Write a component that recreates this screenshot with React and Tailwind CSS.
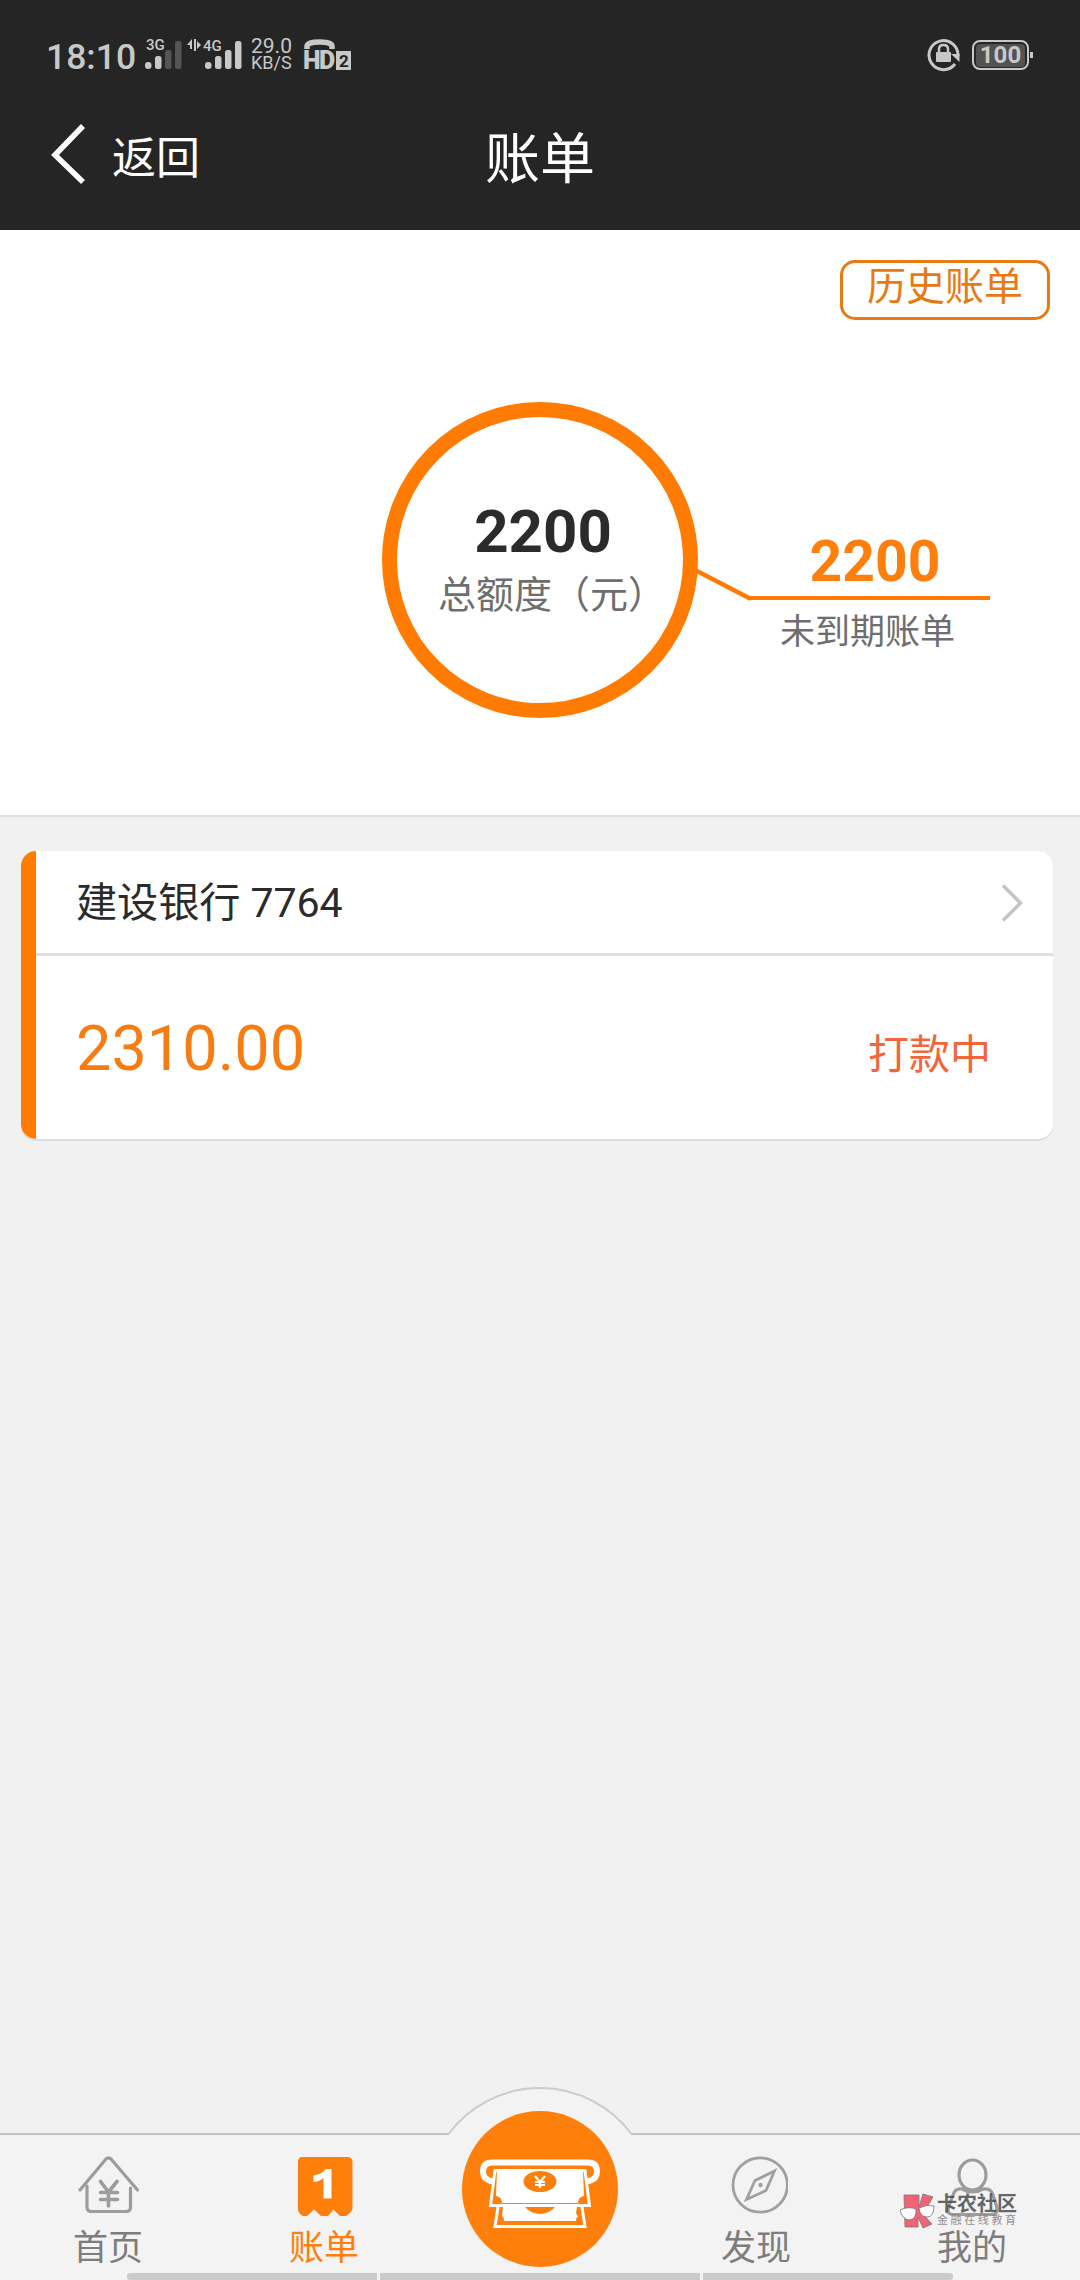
import React from "react";

const TABS = [
    { key: "home", label: "首页", Icon: HomeIcon },
    { key: "bill", label: "账单", Icon: BillIcon, active: true },
    { key: "cash", label: "", Icon: null },
    { key: "discover", label: "发现", Icon: CompassIcon },
    { key: "me", label: "我的", Icon: UserIcon },
];

function HomeIcon() {
    return (
        <svg className="block" width="64" height="64" viewBox="0 0 64 64" fill="none" stroke="#9c9c9c" strokeLinecap="round" strokeLinejoin="round">
            <path d="M4 37 L30 6 Q32.500 3.500 35 6 L61.500 37" strokeWidth="3.200" />
            <path d="M11 33 V54 Q11 58.500 15.500 58.500 H50 Q54.500 58.500 54.500 54 V35" strokeWidth="3.200" />
            <path d="M24.500 28.500 L32.500 39 L41 28.500 M32.500 39 V53 M24.500 39.500 H41.500 M24.500 46.500 H41.500" strokeWidth="3.600" />
        </svg>
    );
}

function BillIcon() {
    return (
        <svg className="block" width="64" height="64" viewBox="0 0 64 64">
            <path d="M10.500 4 H55 Q60.500 4 60.500 9 V56 Q58 61 54 63 H48 L41.500 56.500 L36 63 H29 L22 56.500 L15 63 H11 Q7 61 6 57 V9 Q6 4 10.500 4 Z" fill="#ff7f0c" />
            <path d="M34 16 H39.500 V45.500 H31.500 V25 Q27 29 21.500 29 V22.500 Q30 21 34 16 Z" fill="#fff" />
        </svg>
    );
}

function CompassIcon() {
    return (
        <svg className="block" width="64" height="64" viewBox="0 0 64 64" fill="none" stroke="#a0a0a0">
            <circle cx="36.200" cy="32" r="27.200" strokeWidth="2.800" />
            <path d="M50.500 18 L42 37.500 L22.500 46.500 L31 27.500 Z" strokeWidth="2.800" />
            <circle cx="36.500" cy="32" r="2.200" fill="#a0a0a0" stroke="none" />
        </svg>
    );
}

function UserIcon() {
    return (
        <svg className="block" width="64" height="64" viewBox="0 0 64 64" fill="none" stroke="#9c9c9c" strokeWidth="3.200">
            <ellipse cx="32.500" cy="22" rx="13.500" ry="15" />
            <path d="M22 36 Q15 35 13 42 L9 53 Q6 61.500 13 61.500 H51 Q59 61.500 56.500 53 L53 42 Q51 35 43 36 Q32.500 42 22 36 Z" />
        </svg>
    );
}

function SignalBars({ dim }) {
    return (
        <svg className="block" width="37" height="30" viewBox="0 0 37 30" fill="#c8c8c8">
            <rect x="0" y="21" width="6.500" height="7" rx="3" />
            <rect x="10" y="15" width="6.500" height="13" rx="2.500" />
            <rect x="20" y="9" width="6.500" height="19" rx="2.500" fill={dim ? "#555" : "#c8c8c8"} />
            <rect x="30" y="0" width="6.500" height="28" rx="2.500" fill={dim ? "#555" : "#c8c8c8"} />
        </svg>
    );
}

function StatusBar() {
    return (
        <div className="flex h-[110px] justify-between pl-[46px] pr-[47px] text-[#c8c8c8]">
            <div className="flex">
                <span className="mt-[36px] w-[99px] text-[35.500px] leading-[42px] font-medium">18:10</span>
                <div className="relative mt-[41px] w-[42px]">
                    <SignalBars dim />
                    <span className="absolute top-[-3px] left-[1px] text-[15px] leading-[15px] font-medium">3G</span>
                </div>
                <svg className="mt-[38px] block" width="15" height="14" viewBox="0 0 15 14" fill="#c8c8c8">
                    <path d="M0 7 L5 1 V11 H3 V7 Z M7 1 H9 V13 H7 Z M10 3 L14 7 L10 11 Z" />
                </svg>
                <div className="relative mt-[41px] ml-[3px] w-[46px]">
                    <SignalBars />
                    <span className="absolute top-[-2px] left-[-2px] text-[15px] leading-[15px] font-medium">4G</span>
                </div>
                <div className="mt-[38px] w-[53px]">
                    <div className="text-[21px] leading-[17px]">29.0</div>
                    <div className="text-[18px] leading-[16px]">KB/S</div>
                </div>
                <div className="relative mt-[38px] h-8 w-12">
                    <svg className="block" width="48" height="32" viewBox="0 0 48 32">
                        <path d="M3 11 V8.500 Q3 4 16 4 Q28 4 28 8.500 V11" fill="none" stroke="#c8c8c8" strokeWidth="5.500" />
                        <rect x="32" y="13" width="15" height="19" fill="#c8c8c8" />
                    </svg>
                    <span className="absolute top-[11px] left-[-1px] text-[25px] leading-[24px] font-black tracking-[-1.500px]">HD</span>
                    <span className="absolute top-[14px] left-[35px] text-[17px] leading-[18px] font-bold text-[#252525]">2</span>
                </div>
            </div>
            <div className="flex pt-[38px]">
                <svg className="mr-[11px] block" width="34" height="34" viewBox="0 0 34 34">
                    <path d="M28 26 A14.500 14.500 0 1 1 31 18" fill="none" stroke="#c8c8c8" strokeWidth="3" />
                    <path d="M24 16 H32.500 V24 Z" fill="#c8c8c8" />
                    <rect x="9" y="14" width="15" height="10" rx="1" fill="#c8c8c8" />
                    <path d="M12 15 V11 Q12 7 16.500 7 Q21 7 21 11 V15" fill="none" stroke="#c8c8c8" strokeWidth="2.500" />
                </svg>
                <div className="mt-[2px] flex h-[30px] w-[57px] items-center justify-center rounded-[8px] border-2 border-[#c8c8c8] p-[2px]">
                    <span className="flex h-[23px] w-full items-center justify-center rounded-[4px] bg-[#525252] text-[24px] leading-none font-bold">100</span>
                </div>
                <div className="mt-[14px] ml-[1px] h-[6px] w-[3px] bg-[#c8c8c8]" />
            </div>
        </div>
    );
}

function NavBar() {
    return (
        <div className="grid h-[120px] grid-cols-3 text-white">
            <div className="flex pl-[50px]">
                <svg className="mt-[14px] block" width="38" height="60" viewBox="0 0 38 60" fill="none" stroke="#fff" strokeWidth="5.500">
                    <path d="M33 2 L5 31 L33 58" />
                </svg>
                <span className="mt-[19px] ml-[24px] text-[44px] leading-[60px]">返回</span>
            </div>
            <h1 className="mt-[14px] text-center text-[55px] leading-[70px]">账单</h1>
        </div>
    );
}

function Quota() {
    return (
        <section className="flex h-[587px] flex-col border-b-2 border-[#dedede] bg-white">
            <button className="mt-[30px] mr-[30px] h-[60px] w-[210px] self-end rounded-[15px] border-3 border-[#e87a14] pb-[5px] text-[39px] leading-[47px] text-[#e87a14]">
                历史账单
            </button>
            <div className="mt-[82px] flex pl-[382px]">
                <div className="h-[316px] w-[316px] shrink-0 rounded-full border-[15px] border-[#ff7b02] pt-[79px]">
                    <div className="text-center text-[60px] leading-[72px] font-bold text-[#2b2b2b]">
                        <span className="relative left-[3px]">2200</span>
                    </div>
                    <div className="mt-[2px] ml-[41px] text-[38px] leading-[50px] whitespace-nowrap text-[#6e6e6e]">总额度（元）</div>
                </div>
                <svg className="mt-[160px] -ml-[3px] block shrink-0" width="56" height="46" viewBox="0 0 56 46" fill="none" stroke="#ff7b02" strokeWidth="4.500">
                    <path d="M0 8 L54 36 H56" />
                </svg>
                <div className="mt-[125px] w-[239px] text-center">
                    <div className="h-[73px] border-b-4 border-[#ff7b02] pl-[9px] text-[57px] leading-[70px] font-bold text-[#ff7f0c]">2200</div>
                    <div className="mt-[9px] pr-[6px] text-[35px] leading-[48px] text-[#6e6e6e]">未到期账单</div>
                </div>
            </div>
        </section>
    );
}

function BillCard() {
    return (
        <section className="mt-[34px] mr-[27px] ml-[21px] flex h-[288px] overflow-hidden rounded-[15px] bg-white shadow-[0_2px_1px_#dedede]">
            <div className="w-[15px] bg-[#ff7b02]" />
            <div className="flex-1">
                <div className="flex h-[105px] justify-between border-b-3 border-[#e0e0e0] pr-[29px] pl-10">
                    <span className="mt-[22px] text-[41.200px] leading-[60px] tracking-[-0.1px] text-[#2b2b2b]">建设银行 7764</span>
                    <svg className="mt-[32px] block" width="24" height="40" viewBox="0 0 24 40" fill="none" stroke="#c4c4c4" strokeWidth="3.500">
                        <path d="M3 2.500 L20.500 20 L3 37.500" />
                    </svg>
                </div>
                <div className="flex justify-between pr-[62px] pl-10">
                    <span className="mt-[55px] text-[63px] leading-[76px] text-[#f57d13]">2310.00</span>
                    <span className="mt-[69px] text-[41px] leading-[60px] text-[#f2663c]">打款中</span>
                </div>
            </div>
        </section>
    );
}

function CashButton() {
    return (
        <svg className="absolute top-[-49px] left-1/2 -ml-[93px]" width="186" height="190" viewBox="0 0 186 190">
            {/* bump above the bar */}
            <path d="M0 51 L1.500 48.500 A114 114 0 0 1 184.500 48.500 L186 51 Z" fill="#f3f3f3" />
            <path d="M0 49 L1.500 48 A114 114 0 0 1 184.500 48 L186 49" fill="none" stroke="#cbcbcb" strokeWidth="2" />
            <circle cx="93" cy="103" r="78" fill="#ff7f0c" />
            {/* slot */}
            <path d="M46 95 H44 Q36 93 36 85.500 Q36 76.500 45 76.500 H141 Q150 76.500 150 85.500 Q150 93 142 95 H140" fill="none" stroke="#fff" strokeWidth="6" />
            {/* back note */}
            <path d="M51 121 L48 140.500 H138 L135 121" fill="none" stroke="#fff" strokeWidth="3" />
            <path d="M56 121 H130 L129 127 L131 131 Q129 131 129 135 H57 Q57 131 55 130 Z" fill="#fff" />
            <path d="M78 121 H108 Q102 128 93 128 Q84 128 78 121 Z" fill="#ff7f0c" />
            {/* front note */}
            <path d="M48 84.500 L43.500 119.500 H142.500 L138 84.500 Z" fill="#ff7f0c" stroke="#fff" strokeWidth="3" />
            <path d="M50 84 H136 L137 110 Q131 111 131 117 H55 Q55 111 49 110 Z" fill="#fff" />
            <ellipse cx="93" cy="95.500" rx="16.500" ry="10.500" fill="#ff7f0c" />
            <path d="M88 90 L93 96 L98 90 M93 96 V102 M88 96 H98 M88 99 H98" fill="none" stroke="#fff" strokeWidth="2.200" />
        </svg>
    );
}

function Watermark() {
    return (
        <div className="absolute top-[58px] left-[900px] flex opacity-80">
            <svg className="block" width="35" height="36" viewBox="0 0 35 36">
                <path d="M4 2 H19 V14 L23 1 L33 4 L27 14 L19 17 L32 31 L23 35 L18 24 V34 H5 Z" fill="#f4405a" stroke="#555" strokeWidth="0.800" />
                <path d="M0 17 Q8 13 16 16 Q17 26 9 27 Q2 26 0 17 Z M19 15 Q27 11 34 13 Q34 24 27 24 Q20 24 19 15 Z" fill="#fff" stroke="#555" strokeWidth="0.800" />
            </svg>
            <div className="ml-[2px] whitespace-nowrap">
                <div className="h-[22px] text-[20px] leading-[22px] font-bold text-[#444]">卡农社区</div>
                <div className="text-[11px] leading-[12px] tracking-[2.600px] text-[#777]">金融在线教育</div>
            </div>
        </div>
    );
}

function TabBar() {
    return (
        <nav className="relative flex h-[147px] flex-col justify-between border-t-2 border-[#c2c2c2] bg-[#f3f3f3]">
            <div className="grid grid-cols-5">
                {TABS.map(({ key, label, Icon, active }) => (
                    <div key={key} className="flex flex-col items-center pt-[18px]">
                        {Icon && <Icon />}
                        <span className={`mt-[8px] text-[35px] leading-[48px] ${active ? "text-[#ff7f0c]" : "text-[#7d7d7d]"}`}>
                            {label}
                        </span>
                    </div>
                ))}
            </div>
            <div className="flex h-[7px] shrink-0 gap-[3px] pl-[127px]">
                <div className="w-[250px] rounded-l-[3px] bg-[#cbcbcb]" />
                <div className="w-[320px] bg-[#cbcbcb]" />
                <div className="w-[250px] rounded-r-[3px] bg-[#cbcbcb]" />
            </div>
            <CashButton />
            <Watermark />
        </nav>
    );
}

export default function App() {
    return (
        <div className="flex h-[2280px] w-[1080px] flex-col overflow-hidden bg-[#f1f1f1] font-[Roboto,'Noto_Sans_CJK_SC',sans-serif]">
            <header className="bg-[#252525]">
                <StatusBar />
                <NavBar />
            </header>
            <main className="flex-1">
                <Quota />
                <BillCard />
            </main>
            <TabBar />
        </div>
    );
}
